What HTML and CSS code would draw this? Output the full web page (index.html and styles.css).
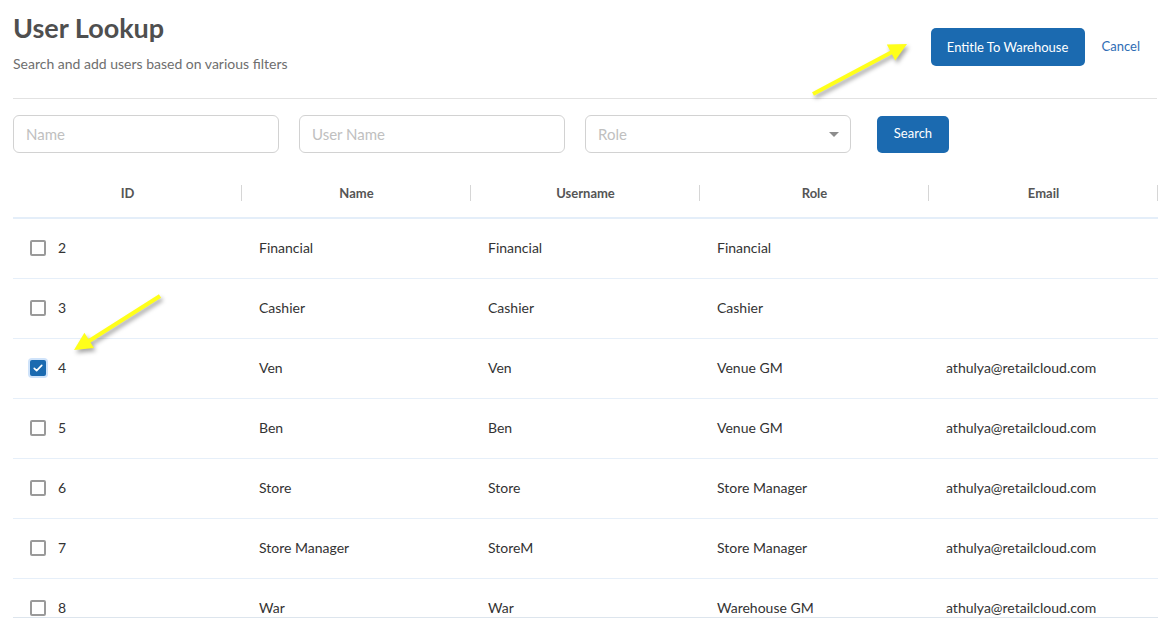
FILE: index.html
```html
<!DOCTYPE html>
<html lang="en">
<head>
    <meta charset="UTF-8">
    <meta name="viewport" content="width=device-width, initial-scale=1.0">
    <title>User Lookup</title>
    <link rel="stylesheet" href="styles.css">
</head>
<body>
<div class="page">
    <!-- Title and actions -->
    <div class="topbar">
        <div class="title-block">
            <h1>User Lookup</h1>
            <p class="subtitle">Search and add users based on various filters</p>
        </div>
        <div class="actions">
            <button class="btn btn-primary btn-entitle">Entitle To Warehouse</button>
            <a href="#" class="link-cancel">Cancel</a>
        </div>
    </div>

    <!-- Filters -->
    <div class="filters">
        <input type="text" class="field" placeholder="Name">
        <input type="text" class="field" placeholder="User Name">
        <div class="field select-field">
            <span class="select-placeholder">Role</span>
            <span class="caret"></span>
        </div>
        <button class="btn btn-primary btn-search">Search</button>
    </div>

    <!-- Users grid -->
    <div class="grid">
        <div class="grid-head">
            <div class="th">ID</div>
            <div class="th">Name</div>
            <div class="th">Username</div>
            <div class="th">Role</div>
            <div class="th">Email</div>
        </div>
        <div class="grid-body">
            <div class="row">
                <div class="td id-cell"><span class="check"></span>2</div>
                <div class="td">Financial</div>
                <div class="td">Financial</div>
                <div class="td">Financial</div>
                <div class="td"></div>
            </div>
            <div class="row">
                <div class="td id-cell"><span class="check"></span>3</div>
                <div class="td">Cashier</div>
                <div class="td">Cashier</div>
                <div class="td">Cashier</div>
                <div class="td"></div>
            </div>
            <div class="row">
                <div class="td id-cell"><span class="check checked">
                    <svg viewBox="0 0 16 16" width="12" height="12"><path d="M3 8.5l3.2 3L13 4.5" fill="none" stroke="#fff" stroke-width="2.2" stroke-linecap="round" stroke-linejoin="round"/></svg>
                </span>4</div>
                <div class="td">Ven</div>
                <div class="td">Ven</div>
                <div class="td">Venue GM</div>
                <div class="td">athulya@retailcloud.com</div>
            </div>
            <div class="row">
                <div class="td id-cell"><span class="check"></span>5</div>
                <div class="td">Ben</div>
                <div class="td">Ben</div>
                <div class="td">Venue GM</div>
                <div class="td">athulya@retailcloud.com</div>
            </div>
            <div class="row">
                <div class="td id-cell"><span class="check"></span>6</div>
                <div class="td">Store</div>
                <div class="td">Store</div>
                <div class="td">Store Manager</div>
                <div class="td">athulya@retailcloud.com</div>
            </div>
            <div class="row">
                <div class="td id-cell"><span class="check"></span>7</div>
                <div class="td">Store Manager</div>
                <div class="td">StoreM</div>
                <div class="td">Store Manager</div>
                <div class="td">athulya@retailcloud.com</div>
            </div>
            <div class="row">
                <div class="td id-cell"><span class="check"></span>8</div>
                <div class="td">War</div>
                <div class="td">War</div>
                <div class="td">Warehouse GM</div>
                <div class="td">athulya@retailcloud.com</div>
            </div>
        </div>
    </div>

    <!-- Highlight arrows drawn over the page -->
    <svg class="arrows" width="1166" height="635" viewBox="0 0 1166 635">
        <g class="arrow">
            <line x1="813" y1="94" x2="892" y2="52" />
            <polygon points="907,44 895.2,60.5 886.8,44.5" />
        </g>
        <g class="arrow">
            <line x1="160" y1="296" x2="89" y2="341" />
            <polygon points="74,350 94,348 84.4,332.8" />
        </g>
    </svg>
</div>
</body>
</html>
```

FILE: styles.css
```css
* {
    box-sizing: border-box;
}

body {
    margin: 0;
    font-family: Lato, "Open Sans", sans-serif;
    color: #333;
    background-color: #fff;
}

.page {
    position: relative;
    padding: 0 8px 0 13px;
    height: 635px;
    overflow: hidden;
}

/* Header */
.topbar {
    display: flex;
    justify-content: space-between;
    align-items: flex-start;
    height: 99px;
    margin-right: 1px;
    border-bottom: 1px solid #e2e2e2;
}

h1 {
    margin: 12px 0 0;
    font-size: 27px;
    font-weight: 700;
    color: #4f4f4f;
    line-height: 32px;
}

.subtitle {
    margin: 12px 0 0;
    font-size: 14px;
    color: #6e6e6e;
    line-height: 16px;
}

.actions {
    display: flex;
    align-items: center;
    gap: 17px;
    margin-top: 28px;
    padding-right: 17px;
}

.btn {
    font-family: inherit;
    border: none;
    border-radius: 5px;
    color: #fff;
    font-size: 13px;
    cursor: pointer;
}

.btn-primary {
    background-color: #1b6ab0;
}

.btn-entitle {
    width: 154px;
    height: 38px;
    padding-bottom: 2px;
}

.link-cancel {
    color: #2f6db5;
    font-size: 13px;
    text-decoration: none;
    margin-bottom: 2px;
}

/* Filters */
.filters {
    display: flex;
    align-items: center;
    margin-top: 16px;
    gap: 20px;
}

.field {
    width: 266px;
    height: 38px;
    border: 1px solid #d2d2d2;
    border-radius: 6px;
    padding: 0 12px;
    font-family: inherit;
    font-size: 15px;
    color: #333;
}

.field::placeholder {
    color: #c0c0c0;
}

.select-field {
    display: flex;
    align-items: center;
    justify-content: space-between;
    padding-right: 11px;
}

.select-placeholder {
    color: #c0c0c0;
}

.caret {
    width: 0;
    height: 0;
    border-left: 5px solid transparent;
    border-right: 5px solid transparent;
    border-top: 5px solid #8d8d8d;
}

.btn-search {
    width: 72px;
    height: 37px;
    margin-left: 6px;
    padding-bottom: 3px;
}

/* Grid */
.grid {
    margin-top: 19px;
}

.grid-head {
    display: grid;
    grid-template-columns: repeat(5, 1fr);
    height: 47px;
    border-bottom: 2px solid #e4eef9;
}

.th {
    position: relative;
    display: flex;
    align-items: center;
    justify-content: center;
    font-size: 13px;
    font-weight: 700;
    color: #555;
    padding-bottom: 4px;
}

.th::after {
    content: "";
    position: absolute;
    right: 0;
    top: 13px;
    height: 16px;
    border-right: 1px solid #d6d6d6;
}

.grid-body {
    height: 399px;
    overflow: hidden;
    border-bottom: 1px solid #dde5ed;
}

.row {
    display: grid;
    grid-template-columns: repeat(5, 1fr);
    height: 60px;
    border-bottom: 1px solid #e6eff9;
}

.td {
    display: flex;
    align-items: center;
    padding-left: 17px;
    padding-bottom: 2px;
    font-size: 14px;
    color: #333;
}

.id-cell {
    gap: 12px;
}

.check {
    display: inline-flex;
    align-items: center;
    justify-content: center;
    width: 16px;
    height: 16px;
    border: 2px solid #9a9a9a;
    border-radius: 2px;
    background-color: #fff;
}

.check.checked {
    border: none;
    background-color: #1b6ab0;
    box-shadow: 0 0 0 2px #cfe3fa;
}

/* Annotation arrows */
.arrows {
    position: absolute;
    left: 0;
    top: 0;
    pointer-events: none;
}

.arrow {
    filter: drop-shadow(2px 3px 2px rgba(0, 0, 0, 0.35));
}

.arrow line {
    stroke: #ffff1a;
    stroke-width: 4;
}

.arrow polygon {
    fill: #ffff1a;
}
```
